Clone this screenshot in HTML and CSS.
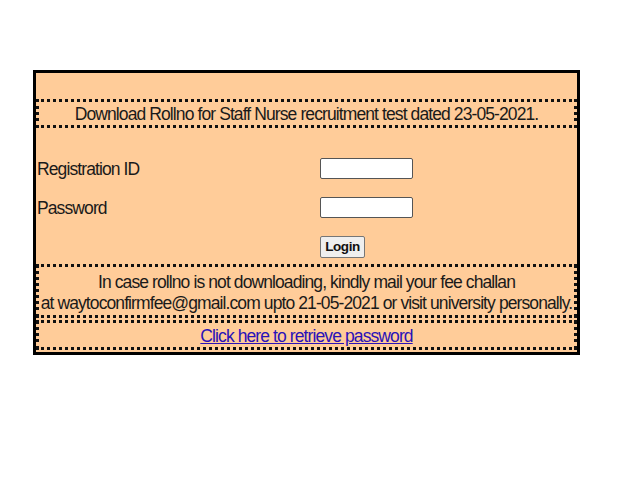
FILE: index.html
```html
<!DOCTYPE html>
<html>
<head>
<meta charset="utf-8">
<title>Download Rollno</title>
<link rel="stylesheet" href="styles.css">
</head>
<body>
<div class="card">
  <div class="note note-title">Download Rollno for Staff Nurse recruitment test dated 23-05-2021.</div>
  <form class="login" onsubmit="return false;">
    <label class="label" for="regid">Registration ID</label>
    <input class="field" id="regid" type="text">
    <label class="label" for="pwd">Password</label>
    <input class="field" id="pwd" type="password">
    <span></span>
    <button class="btn" type="submit">Login</button>
  </form>
  <div class="note note-info">
    <div class="line">In case rollno is not downloading, kindly mail your fee challan</div>
    <div class="line">at waytoconfirmfee@gmail.com upto 21-05-2021 or visit university personally.</div>
  </div>
  <div class="note note-link"><a class="link" href="#">Click here to retrieve password</a></div>
</div>
</body>
</html>
```
FILE: styles.css
```css
html, body {
  margin: 0;
  padding: 0;
  background: #ffffff;
}
body {
  font-family: "Liberation Sans", Arial, sans-serif;
  font-size: 17.5px;
  letter-spacing: -0.9px;
  color: #1a1a1a;
}
.card {
  margin: 70px 0 0 33px;
  width: 541px;
  border: 3px solid #000;
  background: #ffcc99;
  padding: 26px 0 2px 0;
}
.note {
  border: 3px dotted #111;
  text-align: center;
}
.note-title {
  box-sizing: border-box;
  height: 29px;
  padding-top: 1px;
  line-height: 23px;
}
.login {
  display: grid;
  grid-template-columns: 283px 1fr;
  grid-auto-rows: 21px;
  row-gap: 18px;
  align-items: center;
  margin: 30px 0 7px 0;
  padding-left: 1px;
}
.label {
  line-height: 21px;
  padding-top: 1px;
}
.field {
  box-sizing: border-box;
  width: 93px;
  height: 21px;
  margin: 0;
  border: 1px solid #555;
  border-radius: 2px;
  background: #fff;
  padding: 0 3px;
}
.btn {
  box-sizing: border-box;
  width: 45px;
  height: 22px;
  margin: 0;
  padding: 0;
  border: 1px solid #767676;
  border-radius: 2px;
  background: #efefef;
  font-family: "Liberation Sans", Arial, sans-serif;
  font-size: 13.5px;
  font-weight: bold;
  letter-spacing: -0.4px;
  color: #111;
}
.note-info {
  padding: 5px 0 1px 0;
}
.line {
  line-height: 21px;
  white-space: nowrap;
}
.note-link {
  box-sizing: border-box;
  margin-top: 2px;
  height: 30px;
  padding-top: 1px;
  line-height: 24px;
}
.link {
  color: #2a12b8;
  text-decoration: underline;
}
```
